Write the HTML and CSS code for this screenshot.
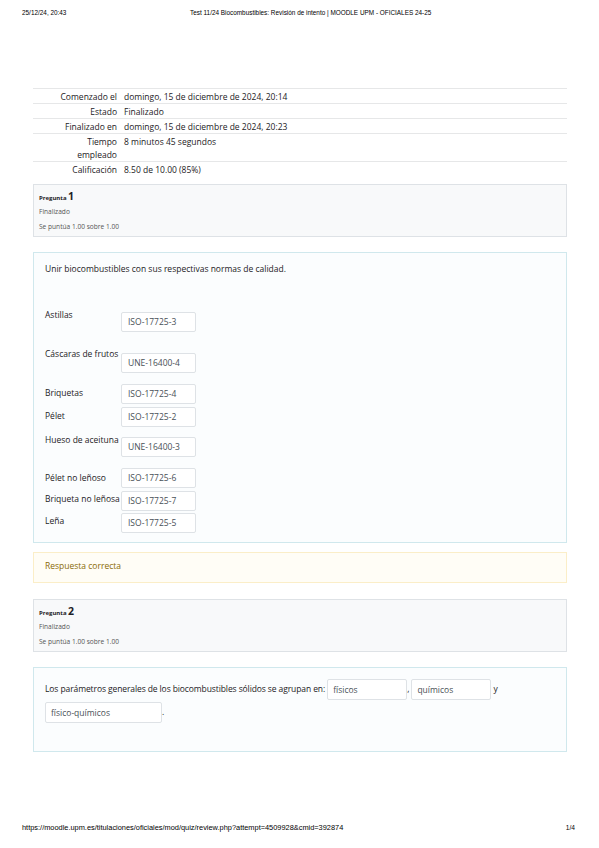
FILE: index.html
```html
<!DOCTYPE html>
<html lang="es">
<head>
<meta charset="utf-8">
<title>Test 11/24 Biocombustibles</title>
<link rel="stylesheet" href="styles.css">
</head>
<body>
<header class="print-head">
  <span class="ph-date">25/12/24, 20:43</span>
  <span class="ph-title">Test 11/24 Biocombustibles: Revisión de intento | MOODLE UPM - OFICIALES 24-25</span>
</header>

<main class="page">
  <div class="summary">
    <div class="srow"><div class="slabel">Comenzado el</div><div class="svalue">domingo, 15 de diciembre de 2024, 20:14</div></div>
    <div class="srow"><div class="slabel">Estado</div><div class="svalue">Finalizado</div></div>
    <div class="srow"><div class="slabel">Finalizado en</div><div class="svalue">domingo, 15 de diciembre de 2024, 20:23</div></div>
    <div class="srow"><div class="slabel">Tiempo<br>empleado</div><div class="svalue">8 minutos 45 segundos</div></div>
    <div class="srow"><div class="slabel">Calificación</div><div class="svalue">8.50 de 10.00 (85%)</div></div>
  </div>

  <div class="info info-1">
    <h3 class="qno">Pregunta <span class="qnum">1</span></h3>
    <div class="state">Finalizado</div>
    <div class="grade">Se puntúa 1.00 sobre 1.00</div>
  </div>

  <div class="formulation f1">
    <p class="qtext">Unir biocombustibles con sus respectivas normas de calidad.</p>
    <div class="match">
      <div class="mrow r1"><div class="mlabel">Astillas</div><div class="sel">ISO-17725-3</div></div>
      <div class="mrow r2"><div class="mlabel">Cáscaras de frutos</div><div class="sel">UNE-16400-4</div></div>
      <div class="mrow r3"><div class="mlabel">Briquetas</div><div class="sel">ISO-17725-4</div></div>
      <div class="mrow r4"><div class="mlabel">Pélet</div><div class="sel">ISO-17725-2</div></div>
      <div class="mrow r5"><div class="mlabel">Hueso de aceituna</div><div class="sel">UNE-16400-3</div></div>
      <div class="mrow r6"><div class="mlabel">Pélet no leñoso</div><div class="sel">ISO-17725-6</div></div>
      <div class="mrow r7"><div class="mlabel">Briqueta no leñosa</div><div class="sel">ISO-17725-7</div></div>
      <div class="mrow r8"><div class="mlabel">Leña</div><div class="sel">ISO-17725-5</div></div>
    </div>
  </div>

  <div class="outcome">Respuesta correcta</div>

  <div class="info info-2">
    <h3 class="qno">Pregunta <span class="qnum">2</span></h3>
    <div class="state">Finalizado</div>
    <div class="grade">Se puntúa 1.00 sobre 1.00</div>
  </div>

  <div class="formulation f2">
    <p class="cloze">Los parámetros generales de los biocombustibles sólidos se agrupan en: <span class="inp w80">físicos</span>, <span class="inp w80">químicos</span> y <span class="inp w117">físico-químicos</span>.</p>
  </div>
</main>

<footer class="print-foot">
  <span class="pf-url">https://moodle.upm.es/titulaciones/oficiales/mod/quiz/review.php?attempt=4509928&amp;cmid=392874</span>
  <span class="pf-page">1/4</span>
</footer>
</body>
</html>
```
FILE: styles.css
```css
* { box-sizing: border-box; }
html, body { margin: 0; padding: 0; background: #fff; }
body {
  width: 599px;
  height: 848px;
  position: relative;
  font-family: "Open Sans", "Noto Sans", sans-serif;
  color: #1d2125;
  overflow: hidden;
}

.print-head {
  display: flex;
  align-items: center;
  height: 24px;
  padding: 0 22px;
  font-family: "Liberation Sans", Arial, sans-serif;
  font-size: 6.4px;
  color: #000;
}
.ph-date { width: 168px; }

.page {
  margin: 64px 32px 0 33px;
}

/* summary table */
.summary { font-size: 8.5px; }
.srow {
  display: flex;
  border-top: 1px solid #e6e7e8;
  padding-top: 1px;
  line-height: 13px;
}
.slabel {
  width: 91px;
  text-align: right;
  padding-right: 7px;
}
.svalue { flex: 1; }

/* question info */
.info {
  background: #f8f9fa;
  border: 1px solid #dee2e6;
  padding: 4px 5px 4px;
}
.info-1 { margin-top: 8px; }
.info-2 { margin-top: 16px; }
.qno {
  margin: 0;
  font-size: 6px;
  font-weight: 700;
  line-height: 14px;
  color: #1d2125;
}
.qnum { font-size: 10.5px; font-weight: 700; }
.state, .grade {
  font-size: 6.6px;
  line-height: 10px;
  color: #555;
}
.state { margin-top: 2px; }
.grade { margin-top: 5px; }

/* formulation */
.formulation {
  background: #fbfdfe;
  border: 1px solid #d0e8ed;
  padding: 10px 11px 9px;
  font-size: 8.5px;
}
.f1 { margin-top: 15px; }
.qtext { margin: 0; line-height: 12px; }

.match { margin-top: 34px; }
.mrow { display: flex; align-items: flex-start; }
.mlabel {
  width: 76px;
  white-space: nowrap;
  line-height: 12px;
}
.sel {
  width: 75px;
  height: 20px;
  border: 1px solid #dee2e6;
  border-radius: 2px;
  background: #fff;
  color: #495057;
  line-height: 18px;
  padding-left: 6px;
}
.r1 .sel { margin-top: 3px; }
.r2 { margin-top: 16px; }
.r2 .sel { margin-top: 5px; }
.r3 { margin-top: 11px; }
.r3 .mlabel { padding-top: 3px; }
.r4 { margin-top: 3px; }
.r4 .mlabel { padding-top: 3px; }
.r5 { margin-top: 7px; }
.r5 .sel { margin-top: 3px; }
.r6 { margin-top: 11px; }
.r6 .mlabel { padding-top: 4px; }
.r7 { margin-top: 3px; }
.r7 .mlabel { padding-top: 2px; }
.r8 { margin-top: 2px; }
.r8 .mlabel { padding-top: 2px; }

.outcome {
  margin-top: 9px;
  height: 31px;
  background: #fffdf6;
  border: 1px solid #fbeec8;
  padding: 7px 11px 0;
  font-size: 8.5px;
  line-height: 12px;
  color: #8a6a06;
}

.f2 {
  margin-top: 15px;
  padding: 9px 11px 28px;
  height: 85px;
}
.cloze { margin: 0; line-height: 23px; letter-spacing: -0.1px; }
.inp {
  display: inline-block;
  vertical-align: middle;
  height: 21px;
  border: 1px solid #dee2e6;
  border-radius: 2px;
  background: #fff;
  color: #495057;
  line-height: 19px;
  padding-left: 5px;
  letter-spacing: 0;
}
.w80 { width: 80px; }
.w117 { width: 117px; }

.print-foot {
  position: absolute;
  left: 22px;
  right: 24px;
  top: 823px;
  display: flex;
  justify-content: space-between;
  align-items: baseline;
  font-family: "Liberation Sans", Arial, sans-serif;
  color: #000;
}
.pf-url { font-size: 7.4px; }
.pf-page { font-size: 6.6px; }
```
